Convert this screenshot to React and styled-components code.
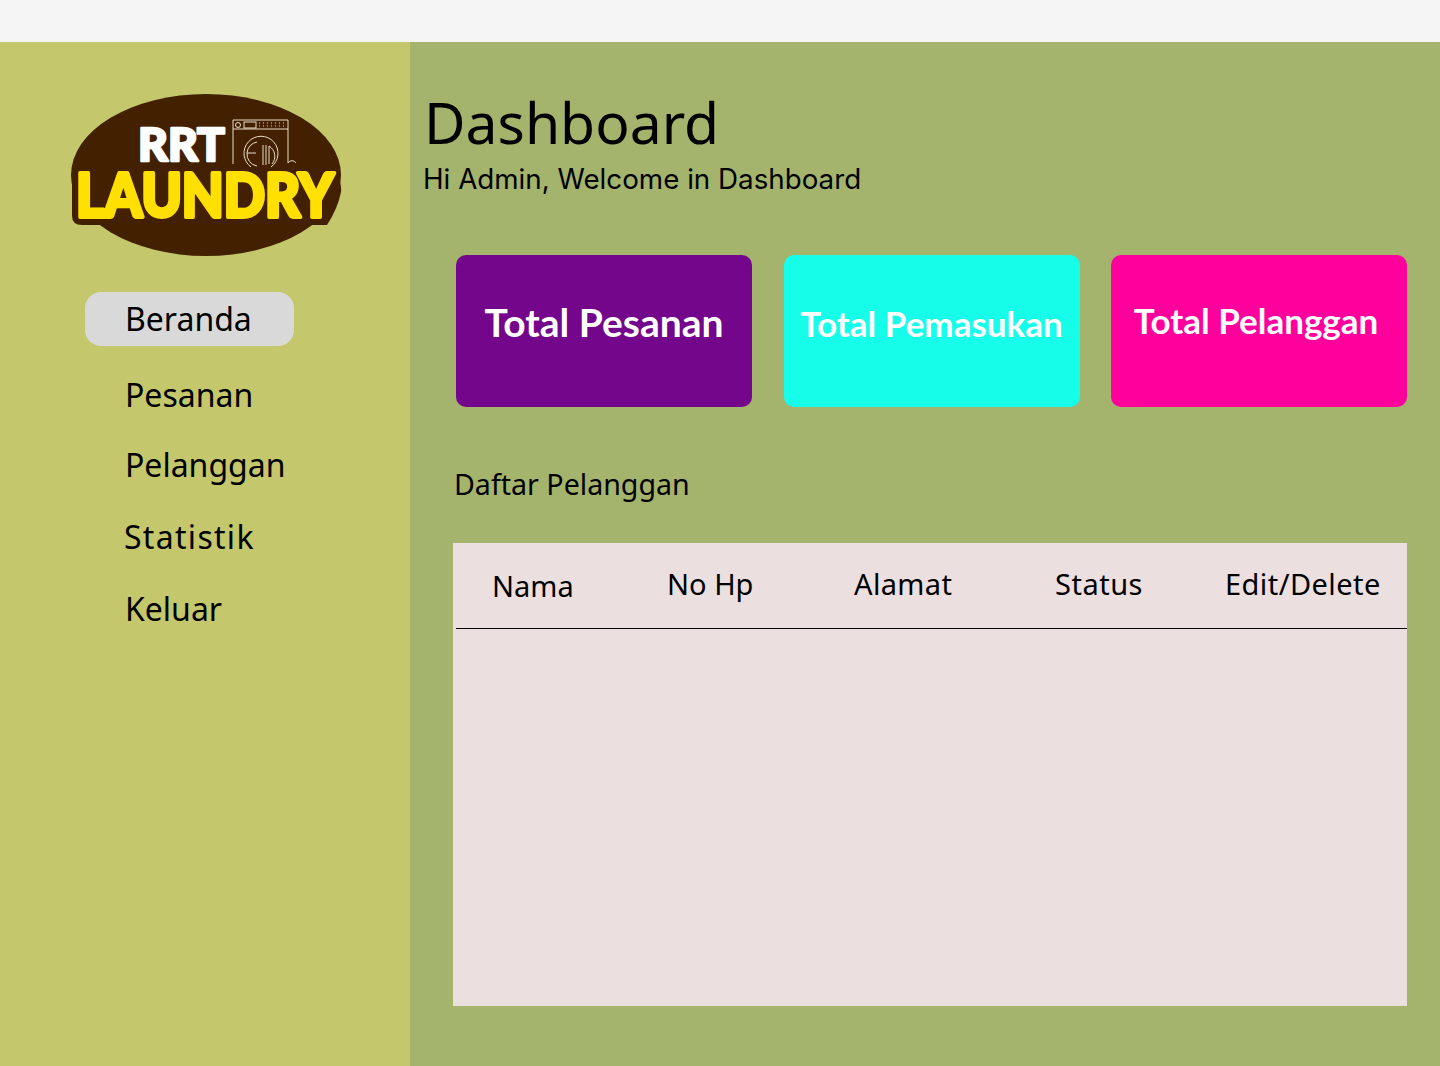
import styled, { createGlobalStyle } from 'styled-components'

const GlobalStyle = createGlobalStyle`
	html, body {
		margin: 0;
		padding: 0;
		background: #f5f5f5;
	}
	* {
		box-sizing: border-box;
	}
`

const Page = styled.div`
	width: 1440px;
	height: 1066px;
	padding-top: 42px;
	overflow: hidden;
	background: #f5f5f5;
	font-family: "Noto Sans", sans-serif;
	color: #000;
`
const Layout = styled.div`
	display: flex;
	height: 1024px;
`
const Sidebar = styled.aside`
	width: 410px;
	flex-shrink: 0;
	background: #c4c76c;
	padding-top: 50px;
`
const LogoWrap = styled.div`
	height: 166px;
	padding-left: 70px;
	svg {
		overflow: visible;
	}
`
const Nav = styled.nav`
	display: flex;
	flex-direction: column;
	margin-top: 34px;
	padding-left: 85px;
`
const NavItem = styled.a`
	display: flex;
	align-items: center;
	width: 209px;
	height: 54px;
	margin-top: ${(props) => props.$gap || 0}px;
	padding: 0 0 2px ${(props) => props.$indent || 40}px;
	border-radius: 16px;
	background: ${(props) => (props.$active ? '#d9d9d9' : 'transparent')};
	font-size: 32px;
	letter-spacing: ${(props) => props.$spacing || 0}px;
	white-space: nowrap;
`
const Main = styled.main`
	flex: 1;
	background: #a4b46d;
	padding: 42px 33px 0 13px;
`
const Title = styled.h1`
	margin: 0 0 0 1px;
	font-size: 57px;
	font-weight: 400;
	line-height: 76px;
`
const Subtitle = styled.p`
	margin: 1px 0 0;
	padding-bottom: 1px;
	font-family: Inter, sans-serif;
	font-size: 27.75px;
	line-height: 36px;
`
const Cards = styled.div`
	display: flex;
	justify-content: space-between;
	margin: 57px 0 0 33px;
`
const Card = styled.div`
	display: flex;
	justify-content: center;
	width: 296px;
	height: 152px;
	padding-top: ${(props) => props.$top}px;
	padding-right: ${(props) => props.$shift || 0}px;
	border-radius: 10px;
	background: ${(props) => props.$bg};
	color: #fff;
	font-family: Lato, sans-serif;
	font-size: ${(props) => props.$size}px;
	font-weight: 700;
	white-space: nowrap;
`
const SectionTitle = styled.h2`
	margin: 57px 0 0 31px;
	font-size: 28.6px;
	font-weight: 400;
	line-height: 40px;
`
const Table = styled.div`
	height: 463px;
	margin: 39px 0 0 30px;
	background: #ebdfdf;
`
const HeadRow = styled.div`
	display: grid;
	grid-template-columns: 211px 187px 201px 170px 1fr;
	height: 86px;
	margin-left: 3px;
	padding-top: 21px;
	border-bottom: 1px solid #000;
`
const HeadCell = styled.div`
	padding-left: ${(props) => (props.$first ? 36 : 0)}px;
	padding-top: ${(props) => (props.$first ? 2 : 0)}px;
	font-size: 29px;
	letter-spacing: ${(props) => props.$spacing || 0}px;
	line-height: 40px;
	white-space: nowrap;
`

const Logo = () => (
	<svg width="274" height="166" viewBox="0 0 274 166">
		<ellipse cx="136" cy="83" rx="135" ry="81" fill="#432100" />
		<path d="M2 84H266Q272 90 271 100Q268 116 257 133H12Q2 133 2 124Z" fill="#432100" />
		<text x="68" y="69" fontFamily="Lato, sans-serif" fontSize="46" fontWeight="900" fill="#fff" stroke="#fff" strokeWidth="2.5" strokeLinejoin="round">RRT</text>
		<text x="6" y="125" fontFamily="Lato, sans-serif" fontSize="60" fontWeight="900" fill="#ffe000" stroke="#ffe000" strokeWidth="4" strokeLinejoin="round" textLength="258" lengthAdjust="spacingAndGlyphs">LAUNDRY</text>
		<g fill="none" stroke="#e8dcc8" strokeWidth="1">
			<path d="M163 72V28H218V71" />
			<path d="M163 37H218" />
			<circle cx="168" cy="33" r="2.5" />
			<rect x="174" y="30" width="12" height="6" />
			<path d="M189 31h28M189 34h28" strokeDasharray="1 3" />
			<path d="M181 75A17 17 0 1 1 201 75" />
			<path d="M187 50a12 12 0 0 0 -10 11a12 12 0 0 0 10 13" />
			<path d="M177 61h9" />
			<path d="M193 53V73M196 53V73M199 54V72" />
			<path d="M199 54a12 12 0 0 1 3 18" />
			<path d="M218 71c2-3 6-3 8 0" />
		</g>
	</svg>
)

const cards = [
	{ label: 'Total Pesanan', bg: '#74068c', size: 39, top: 44 },
	{ label: 'Total Pemasukan', bg: '#16fdea', size: 35, top: 47 },
	{ label: 'Total Pelanggan', bg: '#ff009c', size: 35, top: 44, shift: 6 },
]

const columns = [
	{ label: 'Nama' },
	{ label: 'No Hp' },
	{ label: 'Alamat', spacing: 0.35 },
	{ label: 'Status', spacing: 0.5 },
	{ label: 'Edit/Delete', spacing: 0.45 },
]

const App = () => {
	return (
		<Page>
			<GlobalStyle />
			<Layout>
				<Sidebar>
					<LogoWrap>
						<Logo />
					</LogoWrap>
					<Nav>
						<NavItem $active>Beranda</NavItem>
						<NavItem $gap={22}>Pesanan</NavItem>
						<NavItem $gap={16}>Pelanggan</NavItem>
						<NavItem $gap={18} $indent={39} $spacing={1.3}>Statistik</NavItem>
						<NavItem $gap={18}>Keluar</NavItem>
					</Nav>
				</Sidebar>
				<Main>
					<Title>Dashboard</Title>
					<Subtitle>Hi Admin, Welcome in Dashboard</Subtitle>
					<Cards>
						{cards.map((card) => (
							<Card key={card.label} $bg={card.bg} $size={card.size} $top={card.top} $shift={card.shift}>{card.label}</Card>
						))}
					</Cards>
					<SectionTitle>Daftar Pelanggan</SectionTitle>
					<Table>
						<HeadRow>
							{columns.map((col, i) => (
								<HeadCell key={col.label} $first={i === 0} $spacing={col.spacing}>{col.label}</HeadCell>
							))}
						</HeadRow>
					</Table>
				</Main>
			</Layout>
		</Page>
	)
}

export default App
